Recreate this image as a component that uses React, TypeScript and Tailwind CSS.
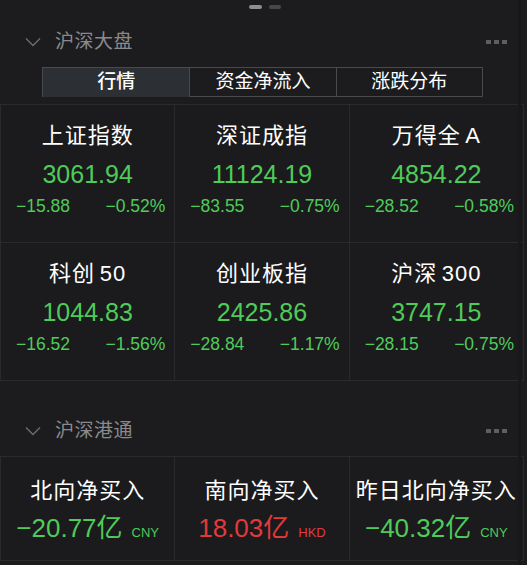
import React from "react";

const FONT = '"Liberation Sans", "Noto Sans CJK SC", sans-serif';

type Index = { name: string; value: string; change: string; pct: string };

const indices: Index[] = [
  { name: "上证指数", value: "3061.94", change: "−15.88", pct: "−0.52%" },
  { name: "深证成指", value: "11124.19", change: "−83.55", pct: "−0.75%" },
  { name: "万得全\u2006A", value: "4854.22", change: "−28.52", pct: "−0.58%" },
  { name: "科创\u200650", value: "1044.83", change: "−16.52", pct: "−1.56%" },
  { name: "创业板指", value: "2425.86", change: "−28.84", pct: "−1.17%" },
  { name: "沪深\u2006300", value: "3747.15", change: "−28.15", pct: "−0.75%" },
];

const flows = [
  { name: "北向净买入", value: "−20.77亿", unit: "CNY", up: false },
  { name: "南向净买入", value: "18.03亿", unit: "HKD", up: true },
  { name: "昨日北向净买入", value: "−40.32亿", unit: "CNY", up: false },
];

function SectionHeader({ title }: { title: string }) {
  return (
    <div className="flex items-center h-[40px] pl-[25px] pr-[20px]">
      <svg width="16" height="10" viewBox="0 0 16 10" className="shrink-0">
        <path d="M1 1.5 L8 8.5 L15 1.5" fill="none" stroke="#6e6e72" strokeWidth="1.3" />
      </svg>
      <span className="ml-[14px] text-[19px] text-[#8a8a8e] tracking-[0.5px]">{title}</span>
      <div className="ml-auto flex gap-[3px]">
        <span className="w-[5px] h-[4px] bg-[#5e5e62]" />
        <span className="w-[5px] h-[4px] bg-[#5e5e62]" />
        <span className="w-[5px] h-[4px] bg-[#5e5e62]" />
      </div>
    </div>
  );
}

export default function App() {
  return (
    <div
      className="relative w-[527px] h-[565px] overflow-hidden bg-[#1c1c1e] text-white"
      style={{ fontFamily: FONT }}
    >
      {/* page dots */}
      <div className="flex justify-center gap-[7px] pt-[5px] pl-[2px]">
        <span className="w-[13px] h-[4px] rounded-full bg-[#8e8e92]" />
        <span className="w-[12px] h-[4px] rounded-full bg-[#48484c]" />
      </div>

      <div className="mt-[13px]">
        <SectionHeader title="沪深大盘" />
      </div>

      {/* tabs */}
      <div className="ml-[42px] mt-[5px] w-[441px] h-[30px] grid grid-cols-3 border border-[#4a4a4e] text-[19px]">
        <div className="flex items-center justify-center bg-[#2c2f33] font-medium">行情</div>
        <div className="flex items-center justify-center border-l border-[#4a4a4e]">资金净流入</div>
        <div className="flex items-center justify-center border-l border-[#4a4a4e]">涨跌分布</div>
      </div>

      {/* index grid */}
      <div className="mt-[7px] w-[524px] grid grid-cols-3 gap-px bg-[#2a2a2d] p-px">
        {indices.map((it) => (
          <div key={it.name} className="h-[137px] bg-[#1b1b1d] flex flex-col items-center pt-[17px]">
            <div className="text-[22px] leading-[28px] tracking-[1px] whitespace-pre">{it.name}</div>
            <div className="mt-[9px] text-[25px] leading-[30px] text-[#4fcb5a]">{it.value}</div>
            <div className="mt-[6px] w-full flex justify-between pl-[15px] pr-[9px] text-[17.5px] leading-[22px] text-[#4fcb5a]">
              <span>{it.change}</span>
              <span>{it.pct}</span>
            </div>
          </div>
        ))}
      </div>

      <div className="mt-[30px]">
        <SectionHeader title="沪深港通" />
      </div>

      {/* stock connect grid */}
      <div className="mt-[5px] w-[524px] grid grid-cols-3 gap-px bg-[#2a2a2d] p-px">
        {flows.map((f) => (
          <div key={f.name} className="h-[103px] bg-[#1b1b1d] flex flex-col items-center pt-[20px]">
            <div className="text-[22px] leading-[28px] tracking-[1px]">{f.name}</div>
            <div
              className={
                "mt-[7px] flex items-baseline gap-[9px] " + (f.up ? "text-[#e03a3a]" : "text-[#4fcb5a]")
              }
            >
              <span className="text-[26px] leading-[32px]">{f.value}</span>
              <span className="text-[13px]">{f.unit}</span>
            </div>
          </div>
        ))}
      </div>

      {/* scrollbar track */}
      <div className="absolute top-0 bottom-0 right-[6px] w-[3px] bg-[#18181a]" />
    </div>
  );
}
